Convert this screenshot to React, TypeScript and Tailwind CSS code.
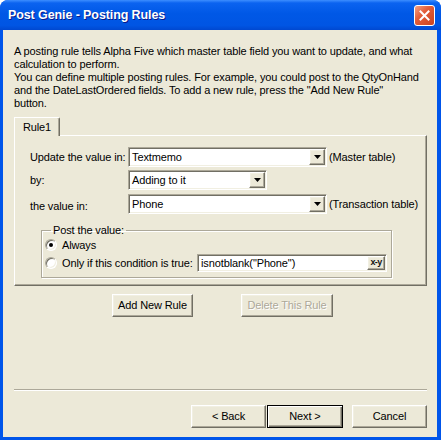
import React from 'react';

// classic 3D borders
const raised =
  'border border-t-white border-l-white border-b-[#716F64] border-r-[#716F64] shadow-[inset_-1px_-1px_0_#ACA899,inset_1px_1px_0_#F1EFE2] bg-[#ECE9D8]';
const sunken =
  'border border-t-[#ACA899] border-l-[#ACA899] border-b-white border-r-white shadow-[inset_1px_1px_0_#716F64,inset_-1px_-1px_0_#F1EFE2] bg-white';

const Arrow = () => (
  <svg width="7" height="4" viewBox="0 0 7 4">
    <path d="M0 0h7L3.5 4z" fill="#000" />
  </svg>
);

function Combo({ value, w }: { value: string; w: string }) {
  return (
    <div className={`${w} h-[20px] flex ${sunken}`}>
      <div className="flex-1 pl-[3px] pt-[2px] leading-[14px] whitespace-nowrap">{value}</div>
      <div className={`w-[16px] my-[1px] mr-[1px] flex items-center justify-center ${raised}`}>
        <Arrow />
      </div>
    </div>
  );
}

function Radio({ checked }: { checked?: boolean }) {
  return (
    <div className="w-[12px] h-[12px] rounded-full bg-white border border-t-[#ACA899] border-l-[#ACA899] border-b-white border-r-white shadow-[inset_1px_1px_0_#716F64,inset_-1px_-1px_0_#F1EFE2] flex items-center justify-center">
      {checked && <div className="w-[4px] h-[4px] rounded-full bg-black" />}
    </div>
  );
}

function Btn({ label, w, disabled, def }: { label: string; w: string; disabled?: boolean; def?: boolean }) {
  if (def) {
    return (
      <button className={`${w} h-[23px] border border-black bg-[#ECE9D8] shadow-[inset_1px_1px_0_#fff,inset_-1px_-1px_0_#716F64,inset_-2px_-2px_0_#ACA899] text-black`}>
        {label}
      </button>
    );
  }
  return (
    <button
      className={`${w} h-[23px] ${raised} ${disabled ? 'text-[#ACA899] [text-shadow:1px_1px_0_#fff]' : 'text-black'}`}
    >
      {label}
    </button>
  );
}

export default function App() {
  return (
    <div className="w-[441px] h-[440px] flex flex-col bg-[#0055EA] rounded-t-[8px] overflow-hidden font-['Liberation_Sans',Arial,sans-serif] text-[11px] tracking-[-0.12px] text-black">
      {/* Title bar */}
      <div className="h-[30px] shrink-0 flex items-center justify-between pl-[8px] pr-[6px] bg-[linear-gradient(to_bottom,#3D8EFF_0%,#0B63F0_10%,#0058E6_45%,#0055E3_85%,#0048D0_100%)]">
        <span className="text-white font-bold text-[12.5px] tracking-[-0.1px] [text-shadow:1px_1px_0_#0A1A8A]">
          Post Genie - Posting Rules
        </span>
        <div className="w-[21px] h-[21px] rounded-[3px] border border-white bg-[linear-gradient(135deg,#F4A184_0%,#E35D3A_40%,#C9431F_100%)] flex items-center justify-center">
          <svg width="11" height="11" viewBox="0 0 11 11">
            <path d="M1.5 1.5l8 8M9.5 1.5l-8 8" stroke="#fff" strokeWidth="2" strokeLinecap="square" />
          </svg>
        </div>
      </div>

      {/* Client area */}
      <div className="flex-1 ml-[3px] mr-[4px] mb-[3px] bg-[#ECE9D8] flex flex-col pl-[11px] pr-[10px] pt-[15px]">
        <div className="leading-[13px] whitespace-nowrap">
          <p>
            A posting rule tells Alpha Five which master table field you want to update, and what
            <br />
            calculation to perform.
          </p>
          <p>
            You can define multiple posting rules. For example, you could post to the QtyOnHand
            <br />
            and the DateLastOrdered fields. To add a new rule, press the "Add New Rule"
            <br />
            button.
          </p>
        </div>

        {/* Tab */}
        <div className="mt-[7px] flex">
          <div className="relative z-10 -mb-px w-[46px] h-[19px] flex items-center justify-center bg-[#ECE9D8] border-t border-l border-t-white border-l-white border-r border-r-[#716F64] shadow-[inset_-1px_0_0_#ACA899] rounded-tr-[2px]">
            Rule1
          </div>
        </div>
        <div className="h-[151px] flex flex-col border border-t-white border-l-white border-b-[#716F64] border-r-[#716F64] shadow-[inset_-1px_-1px_0_#ACA899] pl-[15px] pt-[11px]">
          <div className="flex items-center h-[20px]">
            <div className="w-[98px]">Update the value in:</div>
            <Combo value="Textmemo" w="w-[199px]" />
            <div className="ml-[2px]">(Master table)</div>
          </div>
          <div className="flex items-center h-[20px] mt-[3px]">
            <div className="w-[98px]">by:</div>
            <Combo value="Adding to it" w="w-[139px]" />
          </div>
          <div className="flex items-center h-[20px] mt-[4px]">
            <div className="w-[98px] pt-[5px]">the value in:</div>
            <Combo value="Phone" w="w-[199px]" />
            <div className="ml-[2px]">(Transaction table)</div>
          </div>

          <fieldset className="ml-[11px] mt-[10px] w-[351px] h-[54px] border border-[#ACA899] shadow-[inset_1px_1px_0_#fff,1px_1px_0_#fff] pl-[3px] pr-[4px]">
            <legend className="ml-[6px] px-[2px] leading-[13px]">Post the value:</legend>
            <div className="flex items-center h-[16px] gap-[5px]">
              <Radio checked />
              <span>Always</span>
            </div>
            <div className="flex items-center h-[18px] mt-[1px]">
              <Radio />
              <span className="ml-[5px] w-[135px]">Only if this condition is true:</span>
              <div className={`w-[190px] h-[18px] flex ${sunken}`}>
                <div className="flex-1 pl-[3px] pt-[1px] leading-[14px] whitespace-nowrap">isnotblank("Phone")</div>
                <div className={`w-[18px] my-[1px] mr-[1px] flex items-center justify-center text-[9px] font-bold tracking-[-0.6px] text-[#101010] ${raised}`}>
                  x-y
                </div>
              </div>
            </div>
          </fieldset>
        </div>

        {/* Rule buttons */}
        <div className="flex mt-[8px] pl-[98px]">
          <Btn label="Add New Rule" w="w-[81px]" />
          <div className="ml-[48px]">
            <Btn label="Delete This Rule" w="w-[92px]" disabled />
          </div>
        </div>

        <div className="flex-1" />

        {/* Separator */}
        <div className="h-[2px] border-t border-t-[#ACA899] border-b border-b-white" />

        {/* Wizard buttons */}
        <div className="flex justify-end mt-[14px] mb-[9px]">
          <Btn label="< Back" w="w-[75px]" />
          <div className="ml-[1px]">
            <Btn label="Next >" w="w-[76px]" def />
          </div>
          <div className="ml-[9px]">
            <Btn label="Cancel" w="w-[75px]" />
          </div>
        </div>
      </div>
    </div>
  );
}
